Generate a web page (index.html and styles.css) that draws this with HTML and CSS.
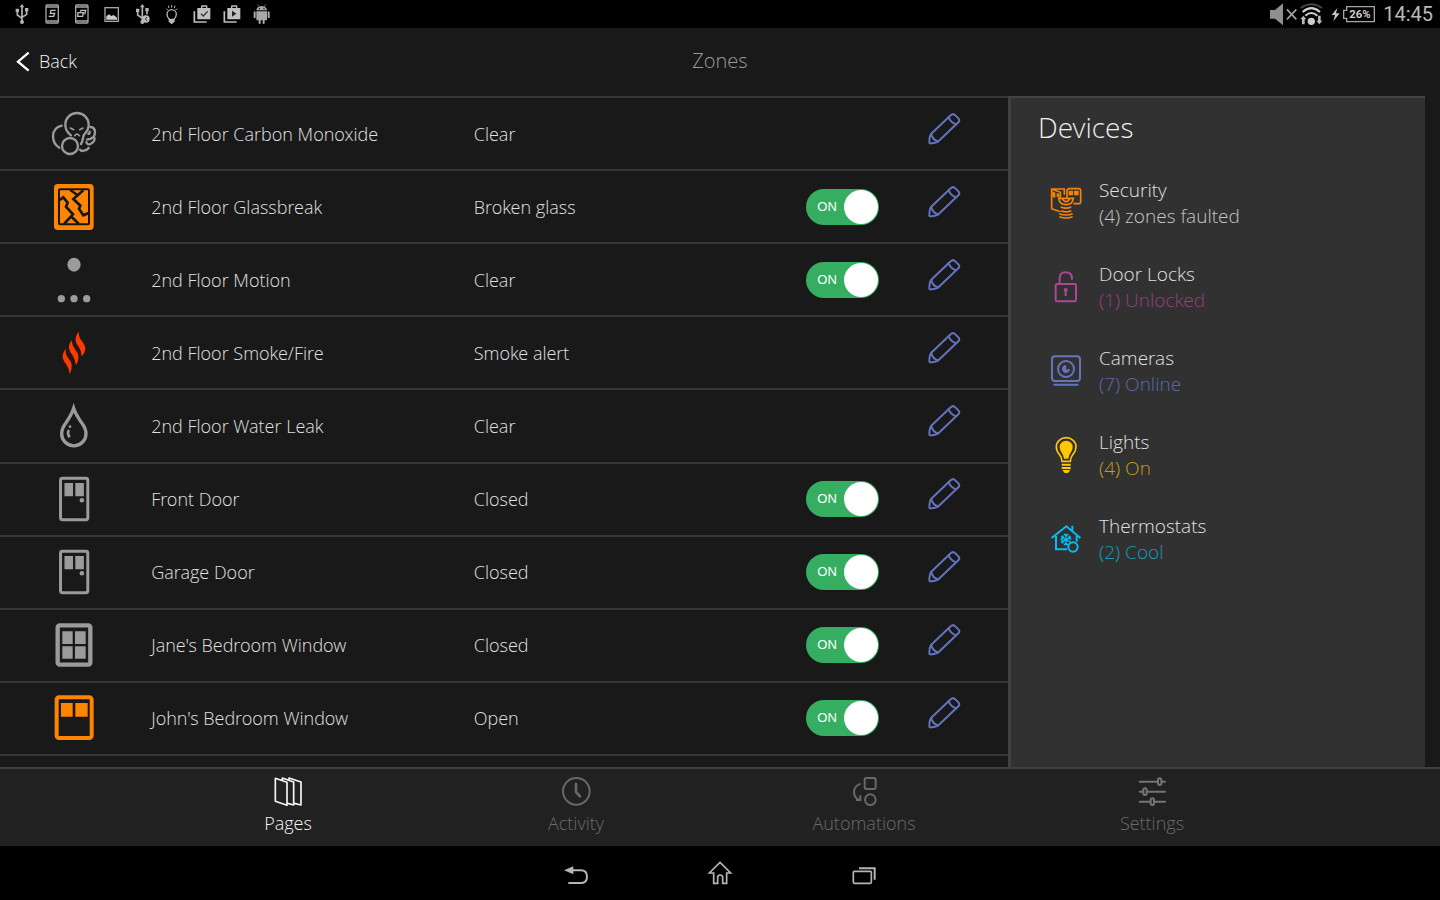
FILE: index.html
```html
<!DOCTYPE html>
<html lang="en">
<head>
<meta charset="utf-8">
<meta name="viewport" content="width=device-width, initial-scale=1">
<title>Zones</title>
<link rel="stylesheet" href="styles.css">
</head>
<body>
<svg class="defs" width="0" height="0" aria-hidden="true">
  <symbol id="pencil" viewBox="440 45 102 102">
    <g fill="none" stroke="#6373bd" stroke-width="6" stroke-linejoin="round" stroke-linecap="round">
      <path d="M452 111L511 55Q518 48 525 55L534 64Q540 70 534 76L475 132Q470 137 453 139Q446 140 447 134Q448 116 452 111Z"/>
      <path d="M505 60Q509 75 527 82M453 112Q457 129 473 133"/>
    </g>
  </symbol>
  <symbol id="door" viewBox="172 480 96 140">
    <rect x="179" y="487" width="83" height="126" rx="6" fill="none" stroke="#9b9b9b" stroke-width="9"/>
    <path d="M191 501h26v41h-26zM224 501h26v41h-26z" fill="#9b9b9b"/>
    <circle cx="244" cy="554" r="7" fill="#9b9b9b"/>
  </symbol>
</svg>

<div class="status-bar">
  <div class="notices">
    <svg viewBox="21 0 90 84" fill="none" stroke="#b5b5b5" stroke-width="5"><path d="M66 20V66M52 34V45L66 55M80 32V43L66 52"/><path d="M66 12l7 10H59zM47 26h10v10H47zM75 24h10v10H75z" fill="#b5b5b5" stroke="none"/><circle cx="66" cy="66" r="6" fill="#b5b5b5" stroke="none"/></svg>
    <svg viewBox="111 0 90 84" fill="none" stroke="#a5a5a5" stroke-width="4"><rect x="138" y="15" width="37" height="54" rx="3"/><path d="M138 21h37M138 63h37" stroke-width="5"/><path d="M167 31H153L151 40H164L161 49H146" stroke="#c0c0c0"/></svg>
    <svg viewBox="201 0 90 84" fill="none" stroke="#a5a5a5" stroke-width="4"><rect x="227" y="15" width="37" height="54" rx="3"/><path d="M227 21h37M227 63h37" stroke-width="5"/><path d="M241 35L243 31H257L254 43M234 38H250L248 49H233Z" stroke="#c0c0c0"/></svg>
    <svg viewBox="291 0 90 84"><rect x="315" y="23" width="40" height="41" fill="none" stroke="#a5a5a5" stroke-width="4"/><path d="M319 59V49l8-6 7 5 7-3 10 8v6z" fill="#ccc"/></svg>
    <svg viewBox="381 0 90 84" fill="none" stroke="#b5b5b5" stroke-width="5"><path d="M427 20V66M413 34V45L427 55M441 32V43"/><path d="M427 12l7 10h-14zM408 26h10v10h-10zM436 24h10v10h-10z" fill="#b5b5b5" stroke="none"/><circle cx="427" cy="66" r="6" fill="#b5b5b5" stroke="none"/><circle cx="438" cy="57" r="11" fill="#bbb" stroke="none"/><path d="M441 51l-5 6 5 6" stroke="#333" stroke-width="3"/></svg>
    <svg viewBox="471 0 90 84" fill="none" stroke="#b5b5b5" stroke-width="4"><path d="M509 59Q501 52 501 43A14 14 0 0 1 529 43Q529 52 521 59Z"/><path d="M508 58h14v6l-7 6-7-6z" fill="#bbb"/><path d="M515 15v8M505 17l2 7M525 17l-2 7M499 26l4 4M531 26l-4 4" stroke-width="3"/></svg>
    <svg viewBox="561 0 90 84"><path d="M592 24h11v-5q0-3 3-3h13q3 0 3 3v5h9v34h-39zM607 24h11v-4h-11z" fill="#c0c0c0" fill-rule="evenodd"/><path d="M583 34V66H620" fill="none" stroke="#c0c0c0" stroke-width="5"/><path d="M603 41l7 7 13-14" fill="none" stroke="#333" stroke-width="4"/></svg>
    <svg viewBox="651 0 90 84"><path d="M682 24h11v-5q0-3 3-3h13q3 0 3 3v5h9v34h-39zM697 24h11v-4h-11z" fill="#c0c0c0" fill-rule="evenodd"/><path d="M673 34V66H710" fill="none" stroke="#c0c0c0" stroke-width="5"/><path d="M696 32v18l13-9z" fill="#222"/></svg>
    <svg viewBox="741 0 90 84" fill="#a8a8a8"><path d="M769 31Q770 19 785 18Q800 19 801 31zM769 34h32v25q0 2-3 2h-26q-3 0-3-2z"/><path d="M777 20l-4-7M793 20l4-7" stroke="#a8a8a8" stroke-width="2"/><path d="M764 37v15M806 37v15M779 58v11M791 58v11" stroke="#a8a8a8" stroke-width="6" stroke-linecap="round"/><circle cx="778" cy="26" r="2" fill="#000"/><circle cx="792" cy="26" r="2" fill="#000"/></svg>
  </div>
  <div class="system">
    <svg class="signal" viewBox="90 0 318 84">
      <path d="M93 30h15l24-20v66l-24-20H93z" fill="#8f8f8f"/>
      <path d="M144 28l28 30M172 28l-28 30" stroke="#a0a0a0" stroke-width="5"/>
      <g fill="none"><path d="M185 24Q217 2 249 24" stroke="#444" stroke-width="6"/><path d="M191 36Q217 13 243 36M199 47Q217 31 235 47" stroke="#d0d0d0" stroke-width="6"/></g>
      <circle cx="217" cy="64" r="11" fill="#ccc"/><path d="M193 47l9 11h-5v15h-8V58h-5zM241 73l-9-11h5V47h8v15h5z" fill="#bbb"/>
      <path d="M295 24l-17 21h10l-5 19 19-24h-11z" fill="#c5c5c5"/>
      <path d="M323 20H406V65H323V55H314V31H323Z" fill="none" stroke="#a5a5a5" stroke-width="4"/>
      <text x="363" y="55" class="charge">26%</text>
    </svg>
    <time>14:45</time>
  </div>
</div>

<header class="top">
  <button class="back" type="button"><svg viewBox="46 150 42 63" fill="none" stroke="#fff" stroke-width="7"><path d="M84 155L52 182L84 209"/></svg>Back</button>
  <h1>Zones</h1>
</header>

<main>
  <ul class="zones">
    <li>
      <svg class="zi" width="46" height="45" viewBox="150 45 138 135" fill="none" stroke="#9b9b9b" stroke-width="7" stroke-linecap="round"><path d="M210 118Q193 105 193 86A35 35 0 0 1 263 86Q263 101 252 112Q247 117 246 127Q244 138 240 144"/><circle cx="207" cy="150" r="24"/><path d="M182 89Q157 95 156 120Q156 144 175 155M268 93Q282 94 282 109Q282 129 258 131M256 139Q260 148 268 144Q281 139 281 127M237 161Q241 167 248 164Q258 163 263 156M262 113Q266 115 266 107"/><path d="M208 96l10 5M246 96l-10 5M221 119Q228 110 235 119" stroke-width="5"/></svg>
      <span>2nd Floor Carbon Monoxide</span><span>Clear</span><span></span>
      <button class="edit" type="button" aria-label="Edit"><svg><use href="#pencil"/></svg></button>
    </li>
    <li>
      <svg class="zi" width="42" height="48" viewBox="159 261 126 144"><rect x="162" y="264" width="119" height="138" rx="11" fill="#ff8400"/><rect x="177" y="280" width="90" height="105" rx="3" fill="none" stroke="#151515" stroke-width="6"/><path d="M179 312L190 304L203 320L198 332L219 355L192 384M212 360L236 383M211 282L232 297M250 283L220 309L241 329L237 338L250 358L266 351" fill="none" stroke="#151515" stroke-width="8"/></svg>
      <span>2nd Floor Glassbreak</span><span>Broken glass</span>
      <label class="toggle"><input type="checkbox" checked aria-label="2nd Floor Glassbreak"><b>ON</b></label>
      <button class="edit" type="button" aria-label="Edit"><svg><use href="#pencil"/></svg></button>
    </li>
    <li>
      <svg class="zi" width="36" height="46" viewBox="167 482 108 138" fill="#9b9b9b"><ellipse cx="221" cy="505" rx="20" ry="21"/><circle cx="183" cy="607" r="11"/><circle cx="221" cy="607" r="11"/><circle cx="259" cy="607" r="11"/></svg>
      <span>2nd Floor Motion</span><span>Clear</span>
      <label class="toggle"><input type="checkbox" checked aria-label="2nd Floor Motion"><b>ON</b></label>
      <button class="edit" type="button" aria-label="Edit"><svg><use href="#pencil"/></svg></button>
    </li>
    <li>
      <svg class="zi" width="28" height="44" viewBox="179 45 84 132" fill="#ff3800"><path d="M235 47Q224 60 226 75Q227 83 236 94Q243 104 244 121Q256 108 255 95Q254 86 245 76Q235 64 235 47z"/><path d="M214 73Q204 86 206 98Q208 107 216 117Q224 128 227 147Q236 132 234 119Q233 111 224 100Q215 89 214 73z"/><path d="M196 99Q185 112 187 125Q189 134 197 144Q206 156 208 175Q216 160 214 145Q213 137 204 127Q195 116 196 99z"/></svg>
      <span>2nd Floor Smoke/Fire</span><span>Smoke alert</span><span></span>
      <button class="edit" type="button" aria-label="Edit"><svg><use href="#pencil"/></svg></button>
    </li>
    <li>
      <svg class="zi" width="30" height="46" viewBox="176 262 90 138" fill="none" stroke="#9b9b9b"><path d="M220 278Q214 297 197 321Q184 338 184 354A36.500 36.500 0 0 0 257 354Q257 338 244 321Q226 297 220 278z" stroke-width="10"/><path d="M206 343Q199 352 208 365" stroke-width="8"/><circle cx="209" cy="333" r="4" fill="#9b9b9b" stroke="none"/></svg>
      <span>2nd Floor Water Leak</span><span>Clear</span><span></span>
      <button class="edit" type="button" aria-label="Edit"><svg><use href="#pencil"/></svg></button>
    </li>
    <li>
      <svg class="zi" width="32" height="46"><use href="#door"/></svg>
      <span>Front Door</span><span>Closed</span>
      <label class="toggle"><input type="checkbox" checked aria-label="Front Door"><b>ON</b></label>
      <button class="edit" type="button" aria-label="Edit"><svg><use href="#pencil"/></svg></button>
    </li>
    <li>
      <svg class="zi" width="32" height="46"><use href="#door"/></svg>
      <span>Garage Door</span><span>Closed</span>
      <label class="toggle"><input type="checkbox" checked aria-label="Garage Door"><b>ON</b></label>
      <button class="edit" type="button" aria-label="Edit"><svg><use href="#pencil"/></svg></button>
    </li>
    <li>
      <svg class="zi" width="38" height="44" viewBox="163 261 114 132"><rect x="171" y="268" width="98" height="118" rx="6" fill="none" stroke="#9b9b9b" stroke-width="13"/><path d="M185 286h31v38h-31zM223 286h32v38h-32zM185 331h31v37h-31zM223 331h32v37h-32z" fill="#9b9b9b"/></svg>
      <span>Jane's Bedroom Window</span><span>Closed</span>
      <label class="toggle"><input type="checkbox" checked aria-label="Jane's Bedroom Window"><b>ON</b></label>
      <button class="edit" type="button" aria-label="Edit"><svg><use href="#pencil"/></svg></button>
    </li>
    <li>
      <svg class="zi" width="40" height="46" viewBox="159 479 120 138"><rect x="167" y="486" width="105" height="122" rx="7" fill="none" stroke="#ff8400" stroke-width="12"/><path d="M180 503h35v41h-35zM223 503h37v41h-37z" fill="#ff8400"/></svg>
      <span>John's Bedroom Window</span><span>Open</span>
      <label class="toggle"><input type="checkbox" checked aria-label="John's Bedroom Window"><b>ON</b></label>
      <button class="edit" type="button" aria-label="Edit"><svg><use href="#pencil"/></svg></button>
    </li>
  </ul>

  <aside>
    <h2>Devices</h2>
    <a class="device" href="#security">
      <svg width="32" height="32" viewBox="120 270 96 96" fill="none" stroke="#f5830a" stroke-width="5"><path d="M151 344L125 335V276H163V293M125 276L151 286V304M171 302V283Q171 275 178 275H206Q212 275 212 281V314Q212 320 206 320H190"/><path d="M127 283l9 4v16l-9-4zM140 288l8 3v10l-8-2zM176 281h13v14h-13zM192 281h14v14h-14z" fill="#f5830a" stroke="none"/><path d="M146 304H190Q187 323 168 323Q149 323 146 304zM157 306Q168 322 179 306"/><path d="M152 330Q168 337 184 330M153 341Q168 348 184 341M148 350Q168 358 188 350M148 359Q168 367 188 359"/></svg>
      <span>Security<small>(4) zones faulted</small></span>
    </a>
    <a class="device locks" href="#locks">
      <svg width="24" height="32" viewBox="132 525 72 96" fill="none" stroke="#ad4599" stroke-width="6"><rect x="137" y="564" width="61" height="52" rx="4"/><path d="M149 563V547Q149 529 167 529Q186 529 186 549" stroke-linecap="round"/><circle cx="167" cy="582" r="6" fill="#ad4599" stroke="none"/><path d="M167 584v16"/></svg>
      <span>Door Locks<small>(1) Unlocked</small></span>
    </a>
    <a class="device cameras" href="#cameras">
      <svg width="32" height="32" viewBox="120 76 96 96" fill="none" stroke="#6475bd" stroke-width="6"><rect x="126" y="80" width="84" height="74" rx="9"/><circle cx="168" cy="118" r="24"/><path d="M133 165H203" stroke-linecap="round"/><path d="M168 106A12 12 0 1 0 180 117L169 120z" fill="#6475bd" stroke="none"/></svg>
      <span>Cameras<small>(7) Online</small></span>
    </a>
    <a class="device lights" href="#lights">
      <svg width="22" height="38" viewBox="136 321 66 114" fill="none" stroke="#ffc800" stroke-width="5"><path d="M157 397Q157 386 149 376Q140 366 140 353A29.500 27 0 0 1 199 353Q199 366 190 376Q182 386 182 397z"/><path d="M163 389Q162 378 156 371Q150 363 150 354A19.500 19 0 0 1 189 354Q189 363 183 371Q177 378 176 389z" fill="#ffc800" stroke="none"/><path d="M156 407H183M156 417H183" stroke-width="6"/><path d="M158 423H182L175 432H165z" fill="#ffc800" stroke="none"/></svg>
      <span>Lights<small>(4) On</small></span>
    </a>
    <a class="device thermostats" href="#thermostats">
      <svg width="30" height="30" viewBox="122 584 90 90" fill="none" stroke="#0bbcee" stroke-width="6"><path d="M124 626L168 591L210 626M186 606V589M137 620V660H170M199 620V637"/><circle cx="188" cy="653" r="14"/><path d="M167 613V648M152 622L182 640M182 622L152 640M161 614L167 620L173 614M161 647L167 641L173 647M151 630L159 627L157 618M183 630L175 627L177 618M151 632L159 635L157 643" stroke-width="4"/></svg>
      <span>Thermostats<small>(2) Cool</small></span>
    </a>
  </aside>
</main>

<nav class="tabs">
  <button class="active" type="button">
    <svg viewBox="101 48 90 93" fill="none" stroke="#f5f5f5" stroke-width="5" stroke-linejoin="round"><path d="M108 55L143 67V136L108 124zM129 60V54L163 66V135L145 130M149 60V54L185 66V135L165 130"/></svg>Pages
  </button>
  <button type="button">
    <svg viewBox="964 49 90 93" fill="none" stroke="#686868" stroke-width="6"><circle cx="1010" cy="95" r="40"/><path d="M1009 73V97L1021 110" stroke-width="8" stroke-linecap="round"/></svg>Activity
  </button>
  <button type="button">
    <svg viewBox="526 49 90 93" fill="none" stroke="#686868" stroke-width="6"><rect x="573" y="55" width="33" height="33" rx="5"/><circle cx="590" cy="120" r="16"/><path d="M561 72Q541 80 541 96Q541 113 555 120M547 121H560V107"/></svg>Automations
  </button>
  <button type="button">
    <svg viewBox="1333 49 90 93" fill="none" stroke="#747474" stroke-width="6" stroke-linecap="round"><path d="M1341 66H1394M1409 66H1417M1341 96H1350M1365 96H1417M1341 126H1372M1387 126H1417"/><rect x="1396" y="56" width="10" height="20" rx="5"/><rect x="1352" y="86" width="10" height="20" rx="5"/><rect x="1374" y="116" width="10" height="20" rx="5"/></svg>Settings
  </button>
</nav>

<nav class="system-nav">
  <button type="button" aria-label="Back"><svg viewBox="965 300 90 78" fill="none" stroke="#b5b5b5" stroke-width="6"><path d="M1000 331H1024Q1043 331 1043 350Q1043 369 1024 369H987"/><path d="M974 331L1002 319V343z" fill="#b5b5b5" stroke="none"/></svg></button>
  <button type="button" aria-label="Home"><svg viewBox="123 300 90 78" fill="none" stroke="#b5b5b5" stroke-width="5"><path d="M168 307L200 339H188V370H176V352Q176 345 168 345Q161 345 161 352V370H149V339H136z"/></svg></button>
  <button type="button" aria-label="Recent apps"><svg viewBox="527 300 90 78" fill="none" stroke="#b5b5b5" stroke-width="5"><rect x="540" y="334" width="54" height="36" rx="3"/><path d="M557 325H604V359" stroke-width="6"/></svg></button>
</nav>
</body>
</html>
```
FILE: styles.css
```css
* { box-sizing: border-box; }

body {
  margin: 0;
  min-height: 100vh;
  display: flex;
  flex-direction: column;
  background: #191919;
  color: #e0e0e0;
  font-family: "Open Sans Light", "Open Sans", "Noto Sans", sans-serif;
  font-weight: 300;
  font-size: 18px;
  line-height: 26px;
}

.defs { position: absolute; }

svg { display: block; flex: none; }

button {
  padding: 0;
  border: 0;
  background: none;
  color: inherit;
  font: inherit;
  cursor: pointer;
}

.status-bar {
  height: 28px;
  padding: 0 7px;
  display: flex;
  justify-content: space-between;
  background: #000;
}

.notices,
.system { display: flex; align-items: center; }

.notices svg { width: 30px; height: 28px; }

.system { gap: 8px; }

.signal { width: 106px; height: 28px; }

.charge {
  font: 700 34px Roboto, sans-serif;
  fill: #ccc;
  text-anchor: middle;
}

.system time {
  font: 400 20px/30px Roboto, sans-serif;
  color: #b8b8b8;
}

.top {
  height: 68px;
  padding: 0 16px 2px;
  display: grid;
  grid-template-columns: 1fr auto 1fr;
  align-items: center;
}

.back {
  justify-self: start;
  display: flex;
  align-items: center;
  gap: 9px;
  color: #f2f2f2;
}

.back svg { width: 14px; height: 21px; }

h1 {
  margin: 0;
  font-size: 20px;
  font-weight: 300;
  color: #999;
}

main {
  flex: 1;
  display: grid;
  grid-template-columns: 1008fr 417fr;
  padding-right: 15px;
}

.zones {
  margin: 0;
  padding: 0 0 11px;
  list-style: none;
  border-top: 2px solid #363636;
  display: grid;
  grid-auto-rows: 1fr;
}

.zones li {
  min-height: 73px;
  display: grid;
  grid-template-columns: 15% 32% 33% 12% 8%;
  align-items: center;
  border-bottom: 2px solid #363636;
}

.zi { justify-self: center; margin-right: 4px; }

.edit { justify-self: start; padding-bottom: 10px; }

.edit svg { width: 34px; height: 34px; }

.toggle {
  width: 73px;
  height: 36px;
  padding: 0 1px 0 11px;
  display: flex;
  align-items: center;
  flex-direction: row-reverse;
  justify-content: space-between;
  border-radius: 18px;
  background: #35ae61;
  cursor: pointer;
}

.toggle input {
  appearance: none;
  width: 34px;
  height: 34px;
  margin: 0;
  border-radius: 50%;
  background: #fff;
}

.toggle b {
  font-family: "Liberation Sans", sans-serif;
  font-size: 13px;
  font-weight: 400;
  color: #fff;
}

aside {
  padding: 10px 27px;
  border-top: 2px solid #444;
  border-left: 3px solid #414141;
  background: #313131;
}

h2 {
  margin: 0 0 31px;
  font-size: 28px;
  line-height: 38px;
  font-weight: 300;
  color: #eee;
}

.device {
  margin-bottom: 32px;
  display: grid;
  grid-template-columns: 56px 1fr;
  column-gap: 5px;
  align-items: center;
  color: inherit;
  font-size: 19px;
  text-decoration: none;
}

.device svg { justify-self: center; }

.device small { display: block; font-size: 19px; color: #c4c4c4; }
.device.locks small { color: #944083; }
.device.cameras small { color: #5b69a6; }
.device.lights small { color: #c39c23; }
.device.thermostats small { color: #1699bd; }

.tabs {
  height: 79px;
  padding: 0 10%;
  display: grid;
  grid-template-columns: repeat(4, 1fr);
  border-top: 2px solid #404040;
  background: #212121;
}

.tabs button {
  padding-top: 7px;
  display: flex;
  flex-direction: column;
  align-items: center;
  gap: 3px;
  color: #6a6a6a;
}

.tabs .active { color: #f5f5f5; }

.tabs svg { width: 30px; height: 31px; }

.system-nav {
  height: 54px;
  padding: 0 35%;
  display: grid;
  grid-template-columns: repeat(3, 1fr);
  background: #000;
}

.system-nav button { display: grid; place-items: center; }

.system-nav svg { width: 30px; height: 26px; }
```
